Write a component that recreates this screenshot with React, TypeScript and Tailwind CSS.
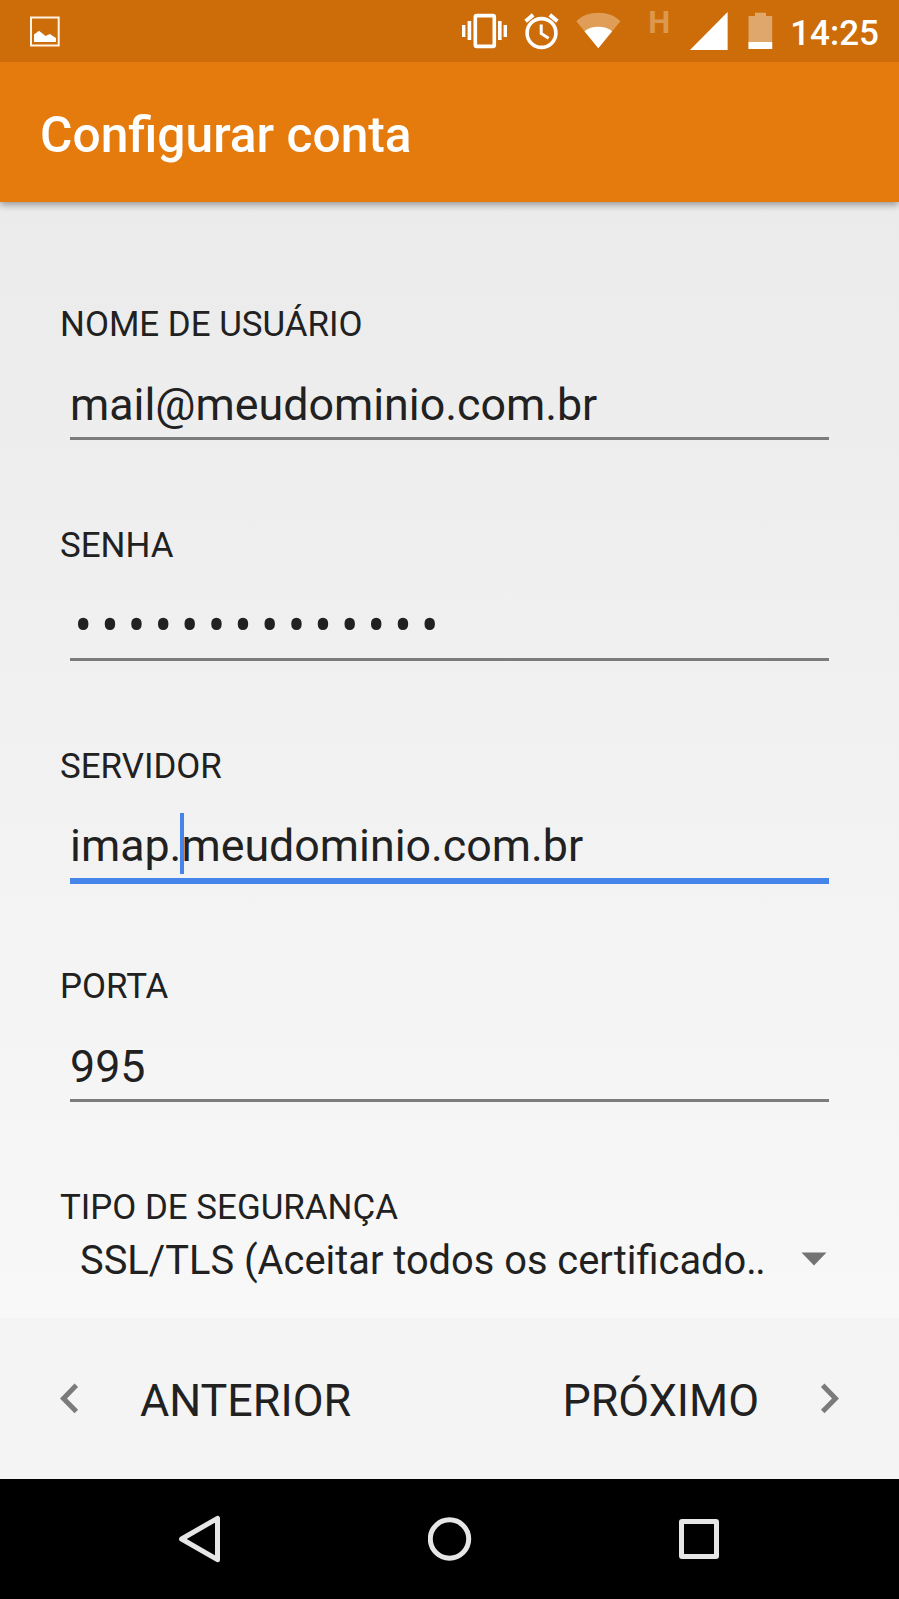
import type { ReactNode } from "react";

function StatusBar() {
  return (
    <div className="flex h-[62px] items-start justify-between bg-[#cc6d0a]">
      <svg className="ml-[30px] mt-4 h-[31px] w-[30px]" viewBox="0 0 30 31" fill="none">
        <rect x="1" y="1.5" width="27.7" height="28" stroke="#fff4e4" strokeWidth="2" />
        <path d="M4 26V18.5L9 14.8L15.5 20L19.8 18L26 22V26Z" fill="#fff" />
      </svg>
      <div className="flex items-start">
        <svg className="mt-3 h-[38px] w-[46px]" viewBox="0 0 46 38" fill="#fff">
          <rect x="13.3" y="3.6" width="19" height="30.8" rx="1.5" fill="none" stroke="#fff" strokeWidth="3.6" />
          <rect x="0" y="13" width="3.4" height="12" />
          <rect x="5.6" y="9" width="3.6" height="19" />
          <rect x="36" y="9" width="3.6" height="19" />
          <rect x="41.6" y="13" width="3.4" height="12" />
        </svg>
        <svg className="ml-4 mt-3 h-[38px] w-[36px]" viewBox="0 0 36 38" fill="none" stroke="#fff">
          <circle cx="17.5" cy="21" r="14.4" strokeWidth="3.6" />
          <path d="M17.2 12.5V21.5L24.6 26.3" strokeWidth="3" />
          <path d="M1.6 9.2L9.2 2.9M25.8 2.9L33.4 9.2" strokeWidth="4" />
        </svg>
        <svg className="ml-4 mt-3 h-[38px] w-[46px]" viewBox="0 0 46 38">
          <path d="M22.3 36.3L0.3 9.2C6 3.6 13.5 0.8 22.3 0.8S38.7 3.6 44.4 9.2Z" fill="#e09d57" />
          <path d="M22.3 36.3L8.5 19.2C12.3 16.3 16.8 14.8 22.3 14.8S32.3 16.3 36.1 19.2Z" fill="#fff" />
        </svg>
        <span className="ml-[26px] mt-[7px] w-[23px] text-[31px] font-bold leading-8 text-[#dd9850]">H</span>
        <svg className="ml-[19px] mt-3 h-[38px] w-[38px]" viewBox="0 0 38 38">
          <path d="M0 38L37.6 0V38Z" fill="#fff" />
        </svg>
        <svg className="ml-5 mt-3 h-[37px] w-[25px]" viewBox="0 0 25 37">
          <path d="M0.5 4H7V0.8H18V4H24.2V37H0.5Z" fill="#e0a76c" />
          <rect x="0.5" y="30" width="23.7" height="7" fill="#fff" />
        </svg>
        <span className="ml-[17px] mr-5 mt-[13px] text-[35px] font-medium leading-[42px] text-white">14:25</span>
      </div>
    </div>
  );
}

function Field({ label, focused, children }: { label: string; focused?: boolean; children: ReactNode }) {
  return (
    <div className="h-[220.55px] pl-[60px] pr-[70px]">
      <div className="h-10 text-[34.9px] leading-10">{label}</div>
      <div className="ml-[10px] mt-[31.6px] h-14 whitespace-nowrap text-[44.75px] leading-[56px]">{children}</div>
      <div className={focused ? "ml-[10px] mt-1 h-[5.5px] bg-[#4584e8]" : "ml-[10px] mt-1 h-[3px] bg-[#7c7c7c]"} />
    </div>
  );
}

export default function App() {
  return (
    <div className="flex h-[1599px] w-[899px] flex-col overflow-hidden bg-[#ebebeb] font-['Roboto',sans-serif] text-[#212121]">
      <header className="relative bg-[#e57a0d] shadow-[0_3px_7px_rgba(0,0,0,0.35)]">
        <StatusBar />
        <h1 className="h-[140px] pl-10 pt-[38px] text-[49.7px] font-medium leading-[70px] text-white">Configurar conta</h1>
      </header>

      <main className="h-[1116px] bg-linear-to-b from-[#ebebeb] to-[#f8f8f8] pt-[103.48px]">
        <Field label="NOME DE USUÁRIO">mail@meudominio.com.br</Field>
        <Field label="SENHA">
          <span className="inline-block translate-y-[0.5px] scale-y-110 pl-[4.5px] text-[52px] leading-[56px] tracking-[9.1px]">
            ••••••••••••••
          </span>
        </Field>
        <Field label="SERVIDOR" focused>
          imap.
          <span className="relative">
            <span className="absolute -top-[6px] -left-[1px] h-[61px] w-1 bg-[#4584e8]" />
            meudominio.com.br
          </span>
        </Field>
        <Field label="PORTA">995</Field>
        <div className="pl-[60px] pr-[72px]">
          <div className="h-10 text-[34.9px] leading-10">TIPO DE SEGURANÇA</div>
          <div className="mt-[9.6px] flex h-12 items-center justify-between pl-5">
            <span className="text-[39.85px] leading-[48px]">
              SSL/TLS (Aceitar todos os certificado<span className="tracking-[-1.5px]">..</span>
            </span>
            <svg className="mb-1 h-[14px] w-[26px]" viewBox="0 0 26 14">
              <path d="M0.5 0.5H25.5L13 13.5Z" fill="#737373" />
            </svg>
          </div>
        </div>
      </main>

      <div className="flex h-[161px] justify-between bg-[#f4f4f4] pl-[60px] pr-[60px] pt-[55.4px]">
        <div className="flex">
          <svg className="mt-[9.6px] h-[31px] w-[19px]" viewBox="0 0 19 31" fill="none" stroke="#7b7b7b" strokeWidth="5">
            <path d="M16.3 2.3L3.5 15.4L16.3 28.5" />
          </svg>
          <span className="ml-[61px] text-[44.85px] leading-[56px]">ANTERIOR</span>
        </div>
        <div className="flex">
          <span className="mr-[61px] text-[44.85px] leading-[56px]">PRÓXIMO</span>
          <svg className="mt-[9.6px] h-[31px] w-[19px]" viewBox="0 0 19 31" fill="none" stroke="#7b7b7b" strokeWidth="5">
            <path d="M2.7 2.3L15.5 15.4L2.7 28.5" />
          </svg>
        </div>
      </div>

      <nav className="flex h-[120px] items-center justify-between bg-black pl-[179px] pr-[180px]">
        <svg className="h-[48px] w-[42px]" viewBox="0 0 42 48" fill="none" stroke="#e6e6e6" strokeWidth="5" strokeLinejoin="round">
          <path d="M38.5 3.3V44.7L2.6 24Z" />
        </svg>
        <svg className="h-11 w-11" viewBox="0 0 44 44" fill="none" stroke="#e6e6e6" strokeWidth="5">
          <circle cx="21.5" cy="22" r="19.2" />
        </svg>
        <div className="size-10 rounded-[3px] border-[5px] border-[#e6e6e6]" />
      </nav>
    </div>
  );
}
